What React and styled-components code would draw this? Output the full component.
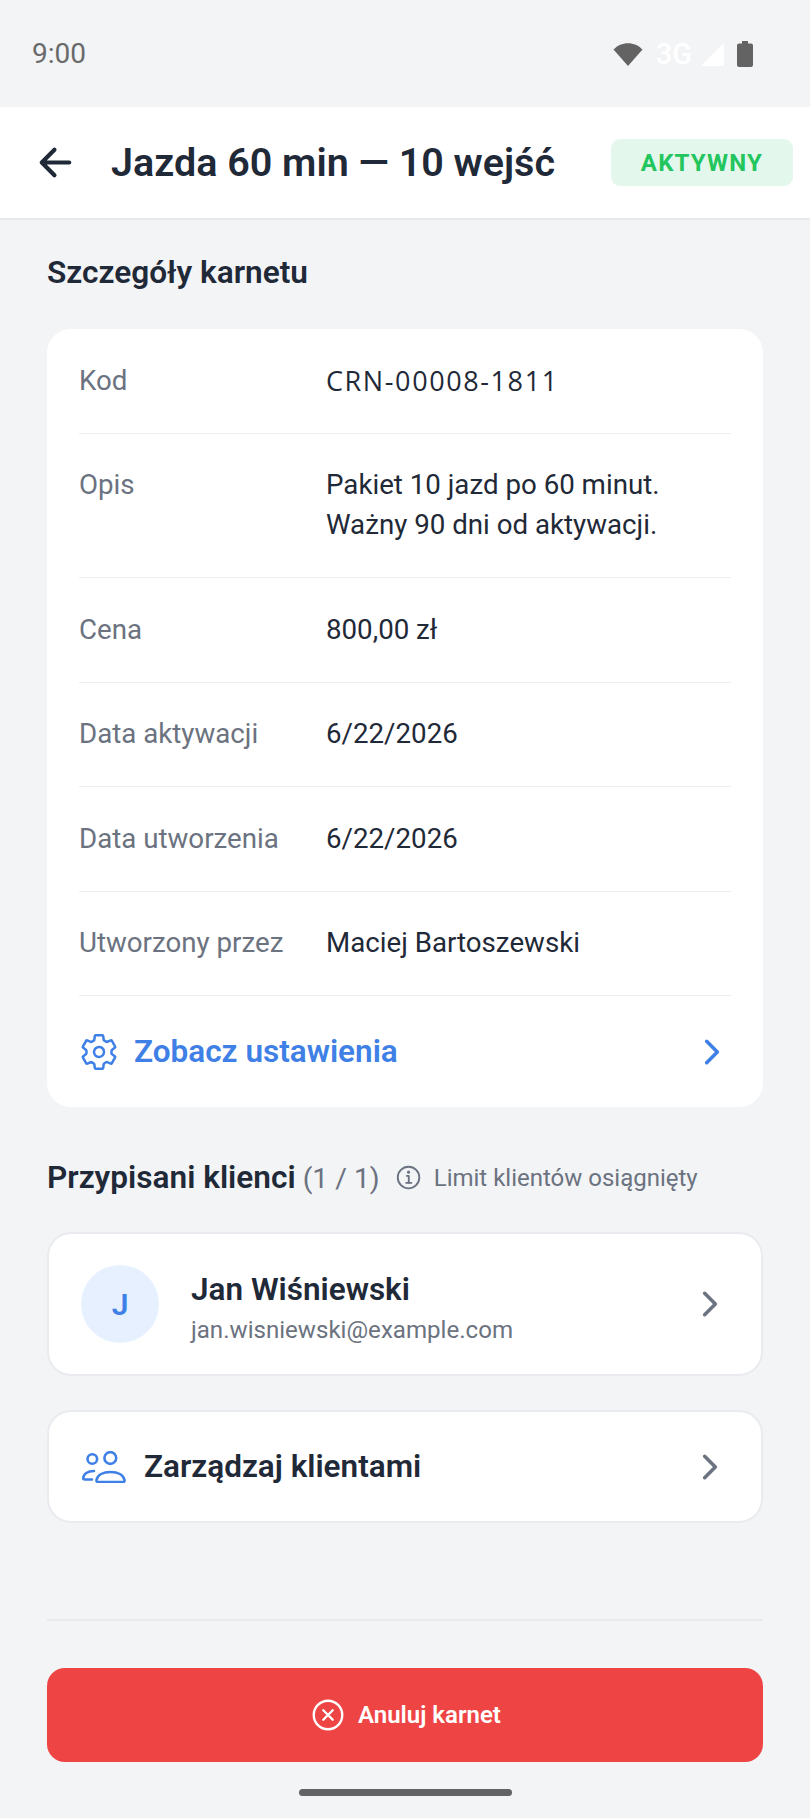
import React from 'react';
import styled, { createGlobalStyle } from 'styled-components';
import {
  IoArrowBack,
  IoChevronForward,
  IoCloseCircleOutline,
  IoInformationCircleOutline,
  IoSettingsOutline,
} from 'react-icons/io5';

const GlobalStyle = createGlobalStyle`
  html, body {
    margin: 0;
    padding: 0;
    background: #f3f4f6;
    font-family: Roboto, "Noto Sans", sans-serif;
  }
`;

const Page = styled.div`
  width: 810px;
  height: 1818px;
  display: flex;
  flex-direction: column;
  background: #f3f4f6;
  color: #1f2937;
  overflow: hidden;
`;

const StatusBar = styled.div`
  height: 107px;
  flex: none;
  display: flex;
  align-items: center;
  justify-content: space-between;
  padding: 0 57px 0 32px;
  box-sizing: border-box;
`;

const Clock = styled.span`
  font-size: 28px;
  color: #6a6a6a;
`;

const StatusIcons = styled.div`
  display: flex;
  align-items: center;
  gap: 13px;
`;

const NetworkLabel = styled.span`
  font-size: 29px;
  font-weight: 500;
  color: #ffffff;
  margin-right: -5px;
`;

const Header = styled.header`
  height: 113px;
  flex: none;
  box-sizing: border-box;
  display: flex;
  align-items: center;
  padding: 0 17px 0 33px;
  background: #ffffff;
  border-bottom: 2px solid #e8eaed;
  svg {
    font-size: 45px;
    flex: none;
  }
`;

const Title = styled.h1`
  margin: 0 0 0 33px;
  font-size: 39.5px;
  font-weight: 600;
  white-space: nowrap;
`;

const Badge = styled.span`
  margin-left: auto;
  width: 182px;
  height: 47px;
  display: flex;
  align-items: center;
  justify-content: center;
  border-radius: 9px;
  background: #e4f7ec;
  color: #22c55e;
  font-size: 24px;
  font-weight: 700;
  letter-spacing: 1.2px;
`;

const Content = styled.main`
  flex: 1;
  display: flex;
  flex-direction: column;
  padding: 0 47px;
`;

const SectionTitle = styled.h2`
  margin: 0;
  font-size: 31.6px;
  line-height: 40px;
  font-weight: 600;
`;

const DetailsTitle = styled(SectionTitle)`
  margin: 33px 0 36px;
`;

const DetailsCard = styled.section`
  background: #ffffff;
  border-radius: 24px;
  padding: 0 32px;
`;

const Row = styled.div`
  display: flex;
  padding: 31.75px 0;
  border-bottom: 1px solid #eceef0;
`;

const Label = styled.span`
  width: 247px;
  flex: none;
  font-size: 27.7px;
  line-height: 40px;
  color: #6b7280;
`;

const Value = styled.span`
  font-size: 27.7px;
  line-height: 40px;
  color: #1f2937;
`;

const CodeValue = styled(Value)`
  font-family: "Open Sans", sans-serif;
  font-size: 27px;
  letter-spacing: 1.6px;
`;

const SettingsLink = styled.a`
  height: 111px;
  display: flex;
  align-items: center;
  color: #3f80e6;
  font-size: 31.5px;
  font-weight: 600;
  svg:first-child {
    font-size: 40px;
    margin-right: 15px;
  }
  svg:last-child {
    font-size: 38px;
    margin-left: auto;
  }
`;

const ClientsHeading = styled.div`
  display: flex;
  align-items: center;
  margin: 51px 0 34px;
  height: 40px;
`;

const Count = styled.span`
  margin-left: 7px;
  font-size: 28.3px;
  color: #6b7280;
`;

const LimitNote = styled.span`
  display: flex;
  align-items: center;
  margin-left: 14px;
  gap: 10px;
  font-size: 24px;
  color: #6b7280;
  svg {
    font-size: 30px;
  }
`;

const ListCard = styled.div`
  box-sizing: border-box;
  height: ${(p) => p.$height}px;
  display: flex;
  align-items: center;
  padding: 0 32px;
  background: #ffffff;
  border: 2px solid #e9ebee;
  border-radius: 24px;
  margin-bottom: 34px;
  > svg:last-child {
    margin-left: auto;
    font-size: 38px;
    color: #6b7280;
  }
`;

const Avatar = styled.div`
  width: 78px;
  height: 78px;
  flex: none;
  border-radius: 50%;
  display: flex;
  align-items: center;
  justify-content: center;
  background: #e6f0fe;
  color: #3f80e6;
  font-size: 30px;
  font-weight: 600;
`;

const ClientInfo = styled.div`
  margin: 8px 0 0 32px;
  display: flex;
  flex-direction: column;
  gap: 4px;
`;

const ClientName = styled.span`
  font-size: 31.5px;
  line-height: 40px;
  font-weight: 600;
`;

const ClientEmail = styled.span`
  font-size: 24.1px;
  line-height: 32px;
  color: #6b7280;
`;

const ManageIcon = styled.svg`
  width: 44px;
  height: 32px;
  flex: none;
  margin: 0 18px 0 1px;
  fill: none;
  stroke: #3f80e6;
  stroke-width: 2.6;
  stroke-linecap: round;
  stroke-linejoin: round;
`;

const ManageLabel = styled.span`
  font-size: 31.5px;
  font-weight: 600;
`;

const Divider = styled.hr`
  margin: 62px 0 47px;
  border: 0;
  border-top: 2px solid #e8eaed;
`;

const CancelButton = styled.button`
  height: 94px;
  display: flex;
  align-items: center;
  justify-content: center;
  gap: 11px;
  border: 0;
  border-radius: 18px;
  background: #ef4444;
  color: #ffffff;
  font-family: inherit;
  font-size: 24px;
  font-weight: 600;
  svg {
    font-size: 38px;
  }
`;

const HomeIndicator = styled.div`
  width: 213px;
  height: 7px;
  margin: 27px auto 0;
  border-radius: 4px;
  background: #636363;
`;

const details = [
  { label: 'Opis', lines: ['Pakiet 10 jazd po 60 minut.', 'Ważny 90 dni od aktywacji.'] },
  { label: 'Cena', lines: ['800,00 zł'] },
  { label: 'Data aktywacji', lines: ['6/22/2026'] },
  { label: 'Data utworzenia', lines: ['6/22/2026'] },
  { label: 'Utworzony przez', lines: ['Maciej Bartoszewski'] },
];

export default function App() {
  return (
    <Page>
      <GlobalStyle />
      <StatusBar>
        <Clock>9:00</Clock>
        <StatusIcons>
          <svg width="30" height="24" viewBox="0 0 30 24">
            <path d="M0.5 7.5 C8 -1 22 -1 29.5 7.5 L15 24 Z" fill="#636363" />
          </svg>
          <NetworkLabel>3G</NetworkLabel>
          <svg width="24" height="24" viewBox="0 0 24 24">
            <path d="M24 1 V24 H1 Z" fill="#ffffff" />
          </svg>
          <svg width="16" height="26" viewBox="0 0 16 26">
            <path d="M5 0 H11 V2.5 H14 Q16 2.5 16 4.5 V24 Q16 26 14 26 H2 Q0 26 0 24 V4.5 Q0 2.5 2 2.5 H5 Z" fill="#636363" />
          </svg>
        </StatusIcons>
      </StatusBar>

      <Header>
        <IoArrowBack />
        <Title>Jazda 60 min — 10 wejść</Title>
        <Badge>AKTYWNY</Badge>
      </Header>

      <Content>
        <DetailsTitle>Szczegóły karnetu</DetailsTitle>
        <DetailsCard>
          <Row>
            <Label>Kod</Label>
            <CodeValue>CRN-00008-1811</CodeValue>
          </Row>
          {details.map((item) => (
            <Row key={item.label}>
              <Label>{item.label}</Label>
              <Value>
                {item.lines.map((line) => (
                  <div key={line}>{line}</div>
                ))}
              </Value>
            </Row>
          ))}
          <SettingsLink>
            <IoSettingsOutline />
            Zobacz ustawienia
            <IoChevronForward />
          </SettingsLink>
        </DetailsCard>

        <ClientsHeading>
          <SectionTitle>Przypisani klienci</SectionTitle>
          <Count>(1 / 1)</Count>
          <LimitNote>
            <IoInformationCircleOutline />
            Limit klientów osiągnięty
          </LimitNote>
        </ClientsHeading>

        <ListCard $height={144}>
          <Avatar>J</Avatar>
          <ClientInfo>
            <ClientName>Jan Wiśniewski</ClientName>
            <ClientEmail>jan.wisniewski@example.com</ClientEmail>
          </ClientInfo>
          <IoChevronForward />
        </ListCard>

        <ListCard $height={113}>
          <ManageIcon viewBox="0 0 44 32">
            <circle cx="10.3" cy="8" r="4.8" />
            <circle cx="28.3" cy="7" r="5.9" />
            <path d="M14.5 29 C15.5 24 21 21 28.5 21 C36 21 41.5 24 42.5 29 Q42.8 31 41 31 H16 Q14.2 31 14.5 29 Z" />
            <path d="M12 20 C5.5 20 1.5 23 1.3 27 Q1.2 28.5 2.8 28.5 H10" />
          </ManageIcon>
          <ManageLabel>Zarządzaj klientami</ManageLabel>
          <IoChevronForward />
        </ListCard>

        <Divider />

        <CancelButton>
          <IoCloseCircleOutline />
          Anuluj karnet
        </CancelButton>

        <HomeIndicator />
      </Content>
    </Page>
  );
}
